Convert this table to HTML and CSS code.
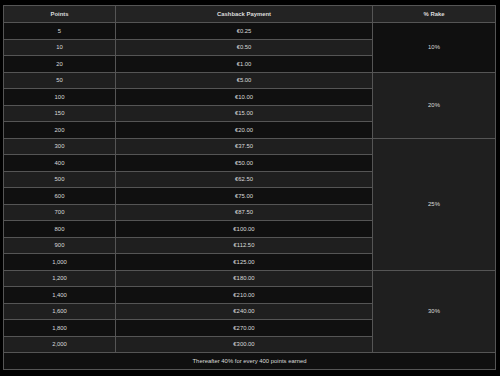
FILE: index.html
```html
<!DOCTYPE html>
<html>
<head>
<meta charset="utf-8">
<link rel="stylesheet" href="styles.css">
</head>
<body>
<table class="rates">
  <colgroup>
    <col class="c1"><col class="c2"><col class="c3">
  </colgroup>
  <thead>
    <tr class="head"><th>Points</th><th>Cashback Payment</th><th>% Rake</th></tr>
  </thead>
  <tbody>
    <tr class="dark"><td>5</td><td>€0.25</td><td rowspan="3" class="rake dark">10%</td></tr>
    <tr class="light"><td>10</td><td>€0.50</td></tr>
    <tr class="dark"><td>20</td><td>€1.00</td></tr>
    <tr class="light"><td>50</td><td>€5.00</td><td rowspan="4" class="rake light">20%</td></tr>
    <tr class="dark"><td>100</td><td>€10.00</td></tr>
    <tr class="light"><td>150</td><td>€15.00</td></tr>
    <tr class="dark"><td>200</td><td>€20.00</td></tr>
    <tr class="light"><td>300</td><td>€37.50</td><td rowspan="8" class="rake dark">25%</td></tr>
    <tr class="dark"><td>400</td><td>€50.00</td></tr>
    <tr class="light"><td>500</td><td>€62.50</td></tr>
    <tr class="dark"><td>600</td><td>€75.00</td></tr>
    <tr class="light"><td>700</td><td>€87.50</td></tr>
    <tr class="dark"><td>800</td><td>€100.00</td></tr>
    <tr class="light"><td>900</td><td>€112.50</td></tr>
    <tr class="dark"><td>1,000</td><td>€125.00</td></tr>
    <tr class="light"><td>1,200</td><td>€180.00</td><td rowspan="5" class="rake light">30%</td></tr>
    <tr class="dark"><td>1,400</td><td>€210.00</td></tr>
    <tr class="light"><td>1,600</td><td>€240.00</td></tr>
    <tr class="dark"><td>1,800</td><td>€270.00</td></tr>
    <tr class="light"><td>2,000</td><td>€300.00</td></tr>
    <tr class="dark foot"><td colspan="3">Thereafter 40% for every 400 points earned</td></tr>
  </tbody>
</table>
</body>
</html>
```
FILE: styles.css
```css
html, body {
  margin: 0;
  background: #000;
}
body {
  padding: 5px 5px 0 3px;
  font-family: "Liberation Sans", Arial, sans-serif;
  font-size: 5.9px;
  color: #dadada;
}
.rates {
  border-collapse: collapse;
  width: 492px;
  table-layout: fixed;
  border: 1px solid #5e5e5e;
}
.c1 { width: 112px; }
.c2 { width: 257px; }
.c3 { width: 123px; }
.rates th, .rates td {
  border: 1px solid #555;
  text-align: center;
  padding: 0;
  vertical-align: middle;
}
.head th {
  height: 16px;
  background: #232323;
  font-weight: bold;
  color: #dcdcdc;
}
tbody tr { height: 16.5px; }
.dark td, td.dark { background: #101010; }
.light td, td.light { background: #1f1f1f; }
.foot td { height: 15px; }
```
